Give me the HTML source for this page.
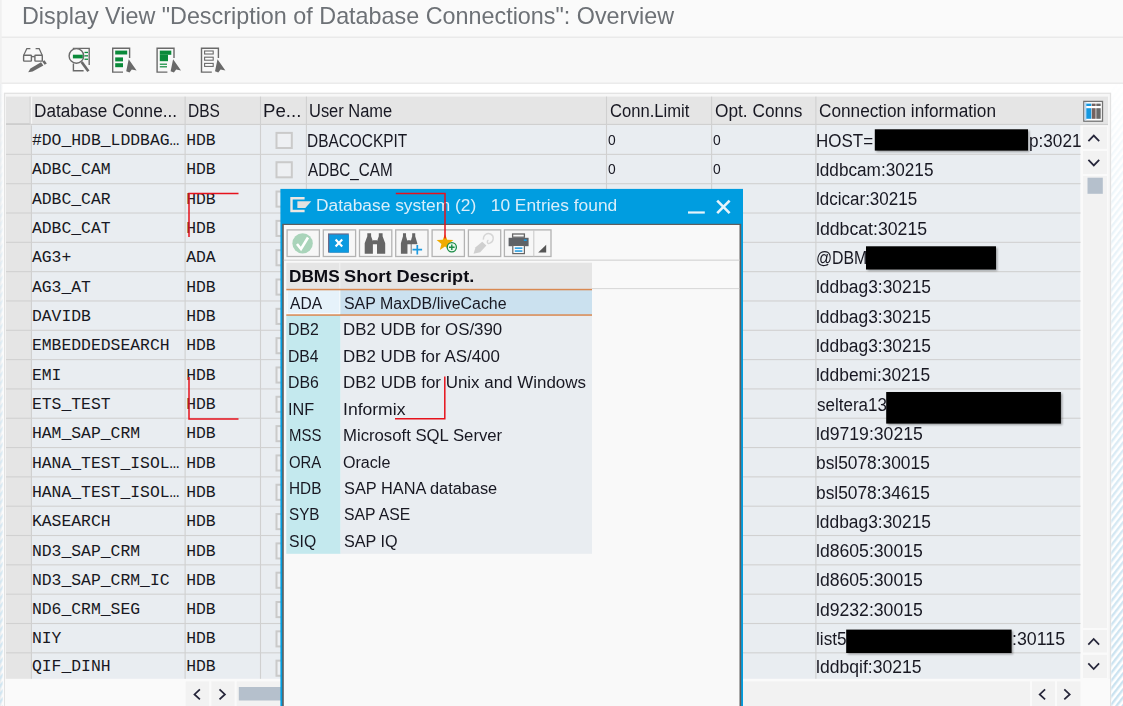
<!DOCTYPE html>
<html><head><meta charset="utf-8"><title>Display View</title><style>
html,body{margin:0;padding:0}
body{width:1123px;height:706px;overflow:hidden;position:relative;background:#fafafa}
svg{position:absolute;left:0;top:0}
span{position:absolute;white-space:pre;line-height:30px;height:30px;transform-origin:0 0}
.title{font-family:"Liberation Sans",sans-serif;font-size:23.6px;font-weight:400;color:#6d7176}
.hd{font-family:"Liberation Sans",sans-serif;font-size:18px;font-weight:400;color:#181822}
.sans{font-family:"Liberation Sans",sans-serif;font-size:18px;font-weight:400;color:#181822}
.mono{font-family:"Liberation Mono",monospace;font-size:16.4px;font-weight:400;color:#181822}
.psans{font-family:"Liberation Sans",sans-serif;font-size:17.3px;font-weight:400;color:#181822}
.pbold{font-family:"Liberation Sans",sans-serif;font-size:17.3px;font-weight:700;color:#0c0c14}
.ptitle{font-family:"Liberation Sans",sans-serif;font-size:17.3px;font-weight:400;color:#d9eefa}
.zero{font-family:"Liberation Sans",sans-serif;font-size:14.8px;font-weight:400;color:#181822}
</style></head><body>
<svg width="1123" height="706" viewBox="0 0 1123 706" style="z-index:1"><defs><pattern id="hatch" width="4.9" height="4.9" patternUnits="userSpaceOnUse" patternTransform="rotate(-52)"><rect width="4.9" height="2.4" fill="#c9e2f0"/></pattern><linearGradient id="hfade" x1="0" y1="0" x2="0" y2="1"><stop offset="0" stop-color="#fff" stop-opacity="1"/><stop offset="0.12" stop-color="#fff" stop-opacity="0.92"/><stop offset="0.55" stop-color="#fff" stop-opacity="0.55"/><stop offset="1" stop-color="#fff" stop-opacity="0.12"/></linearGradient><linearGradient id="ledge" x1="0" y1="0" x2="1" y2="0"><stop offset="0" stop-color="#e9ebed"/><stop offset="1" stop-color="#ffffff"/></linearGradient><linearGradient id="vmg" x1="0" y1="0" x2="0" y2="1"><stop offset="0" stop-color="#fff" stop-opacity="0.02"/><stop offset="0.1" stop-color="#fff" stop-opacity="0.2"/><stop offset="0.35" stop-color="#fff" stop-opacity="0.5"/><stop offset="1" stop-color="#fff" stop-opacity="1"/></linearGradient><mask id="vm" maskUnits="userSpaceOnUse" x="0" y="0" width="1123" height="706"><rect x="0" y="84" width="1123" height="622" fill="url(#vmg)"/></mask></defs>
<rect x="0.00" y="0.00" width="1123.00" height="706.00" fill="#fafafa" />
<rect x="0.00" y="36.70" width="1123.00" height="1.10" fill="#e2e2e2" />
<rect x="0.00" y="37.80" width="1123.00" height="45.20" fill="#f8f8f8" />
<rect x="0.00" y="82.70" width="1123.00" height="1.10" fill="#e2e2e2" />
<rect x="0.00" y="83.80" width="1123.00" height="622.20" fill="#ffffff" />
<rect x="0.00" y="0.00" width="1.70" height="84.00" fill="#f0f0f0" />
<rect x="0.00" y="84.00" width="3.00" height="622.00" fill="url(#ledge)" />
<rect x="0.00" y="84.00" width="2.70" height="622.00" fill="url(#hatch)" mask="url(#vm)" opacity="0.8"/>
<rect x="4.5" y="93.3" width="1106" height="640" fill="#f7f7f7" stroke="#e2e2e2" stroke-width="1.3"/>
<rect x="6.00" y="96.60" width="1102.00" height="27.40" fill="#e5e5e5" />
<rect x="6.00" y="123.20" width="24.80" height="2.20" fill="#cdcdcd" />
<rect x="30.80" y="123.90" width="1077.20" height="1.30" fill="#d0d0d0" />
<rect x="6.00" y="125.30" width="24.80" height="553.60" fill="#e5e5e5" />
<rect x="30.80" y="125.20" width="1049.70" height="553.70" fill="#e9edf1" />
<rect x="1080.50" y="125.30" width="27.50" height="553.60" fill="#fafafa" />
<rect x="1083.00" y="126.70" width="24.00" height="22.10" fill="#f2f2f2" />
<rect x="1083.00" y="151.00" width="24.00" height="23.00" fill="#f2f2f2" />
<rect x="1083.00" y="176.00" width="24.00" height="452.00" fill="#f2f2f2" />
<rect x="1083.00" y="630.00" width="24.00" height="22.50" fill="#f2f2f2" />
<rect x="1083.00" y="654.80" width="24.00" height="23.20" fill="#f2f2f2" />
<rect x="1087.50" y="177.70" width="15.30" height="16.10" fill="#b5c0cc" />
<rect x="6.00" y="153.82" width="1074.50" height="1.10" fill="#d1d1d1" />
<rect x="6.00" y="183.14" width="1074.50" height="1.10" fill="#d1d1d1" />
<rect x="6.00" y="212.46" width="1074.50" height="1.10" fill="#d1d1d1" />
<rect x="6.00" y="241.78" width="1074.50" height="1.10" fill="#d1d1d1" />
<rect x="6.00" y="271.10" width="1074.50" height="1.10" fill="#d1d1d1" />
<rect x="6.00" y="300.42" width="1074.50" height="1.10" fill="#d1d1d1" />
<rect x="6.00" y="329.74" width="1074.50" height="1.10" fill="#d1d1d1" />
<rect x="6.00" y="359.06" width="1074.50" height="1.10" fill="#d1d1d1" />
<rect x="6.00" y="388.38" width="1074.50" height="1.10" fill="#d1d1d1" />
<rect x="6.00" y="417.70" width="1074.50" height="1.10" fill="#d1d1d1" />
<rect x="6.00" y="447.02" width="1074.50" height="1.10" fill="#d1d1d1" />
<rect x="6.00" y="476.34" width="1074.50" height="1.10" fill="#d1d1d1" />
<rect x="6.00" y="505.66" width="1074.50" height="1.10" fill="#d1d1d1" />
<rect x="6.00" y="534.98" width="1074.50" height="1.10" fill="#d1d1d1" />
<rect x="6.00" y="564.30" width="1074.50" height="1.10" fill="#d1d1d1" />
<rect x="6.00" y="593.62" width="1074.50" height="1.10" fill="#d1d1d1" />
<rect x="6.00" y="622.94" width="1074.50" height="1.10" fill="#d1d1d1" />
<rect x="6.00" y="652.26" width="1074.50" height="1.10" fill="#d1d1d1" />
<rect x="184.55" y="96.60" width="1.10" height="582.30" fill="#d0d0d0" />
<rect x="259.95" y="96.60" width="1.10" height="582.30" fill="#d0d0d0" />
<rect x="305.85" y="96.60" width="1.10" height="582.30" fill="#d0d0d0" />
<rect x="605.95" y="96.60" width="1.10" height="582.30" fill="#d0d0d0" />
<rect x="711.05" y="96.60" width="1.10" height="582.30" fill="#d0d0d0" />
<rect x="815.35" y="96.60" width="1.10" height="582.30" fill="#d0d0d0" />
<rect x="30.70" y="125.30" width="1.30" height="553.60" fill="#d0d0d0" />
<rect x="29.40" y="96.60" width="1.40" height="26.80" fill="#d8d8d8" />
<rect x="30.80" y="96.60" width="1.40" height="27.00" fill="#f6f6f6" />
<rect x="276.5" y="132.90" width="15.3" height="15.1" fill="#eef0f3" stroke="#cacaca" stroke-width="2"/>
<rect x="276.5" y="162.22" width="15.3" height="15.1" fill="#eef0f3" stroke="#cacaca" stroke-width="2"/>
<rect x="276.5" y="191.54" width="15.3" height="15.1" fill="#eef0f3" stroke="#cacaca" stroke-width="2"/>
<rect x="276.5" y="220.86" width="15.3" height="15.1" fill="#eef0f3" stroke="#cacaca" stroke-width="2"/>
<rect x="276.5" y="250.18" width="15.3" height="15.1" fill="#eef0f3" stroke="#cacaca" stroke-width="2"/>
<rect x="276.5" y="279.50" width="15.3" height="15.1" fill="#eef0f3" stroke="#cacaca" stroke-width="2"/>
<rect x="276.5" y="308.82" width="15.3" height="15.1" fill="#eef0f3" stroke="#cacaca" stroke-width="2"/>
<rect x="276.5" y="338.14" width="15.3" height="15.1" fill="#eef0f3" stroke="#cacaca" stroke-width="2"/>
<rect x="276.5" y="367.46" width="15.3" height="15.1" fill="#eef0f3" stroke="#cacaca" stroke-width="2"/>
<rect x="276.5" y="396.78" width="15.3" height="15.1" fill="#eef0f3" stroke="#cacaca" stroke-width="2"/>
<rect x="276.5" y="426.10" width="15.3" height="15.1" fill="#eef0f3" stroke="#cacaca" stroke-width="2"/>
<rect x="276.5" y="455.42" width="15.3" height="15.1" fill="#eef0f3" stroke="#cacaca" stroke-width="2"/>
<rect x="276.5" y="484.74" width="15.3" height="15.1" fill="#eef0f3" stroke="#cacaca" stroke-width="2"/>
<rect x="276.5" y="514.06" width="15.3" height="15.1" fill="#eef0f3" stroke="#cacaca" stroke-width="2"/>
<rect x="276.5" y="543.38" width="15.3" height="15.1" fill="#eef0f3" stroke="#cacaca" stroke-width="2"/>
<rect x="276.5" y="572.70" width="15.3" height="15.1" fill="#eef0f3" stroke="#cacaca" stroke-width="2"/>
<rect x="276.5" y="602.02" width="15.3" height="15.1" fill="#eef0f3" stroke="#cacaca" stroke-width="2"/>
<rect x="276.5" y="631.34" width="15.3" height="15.1" fill="#eef0f3" stroke="#cacaca" stroke-width="2"/>
<rect x="276.5" y="660.66" width="15.3" height="15.1" fill="#eef0f3" stroke="#cacaca" stroke-width="2"/>
<rect x="5.00" y="678.90" width="1105.00" height="27.10" fill="#fafafa" />
<rect x="185.70" y="681.30" width="23.50" height="24.70" fill="#f2f2f2" />
<rect x="211.30" y="681.30" width="23.30" height="24.70" fill="#f2f2f2" />
<rect x="236.70" y="681.30" width="793.30" height="24.70" fill="#f2f2f2" />
<rect x="238.80" y="687.00" width="461.20" height="13.50" fill="#b5c0cc" />
<rect x="1032.00" y="681.30" width="23.00" height="24.70" fill="#f2f2f2" />
<rect x="1057.00" y="681.30" width="23.50" height="24.70" fill="#f2f2f2" />
<polyline points="1088.40,141.20 1093.80,135.60 1099.20,141.20" fill="none" stroke="#26263a" stroke-width="1.75"/>
<polyline points="1088.40,159.80 1093.80,165.40 1099.20,159.80" fill="none" stroke="#26263a" stroke-width="1.75"/>
<polyline points="1088.30,644.60 1093.70,639.00 1099.10,644.60" fill="none" stroke="#26263a" stroke-width="1.75"/>
<polyline points="1088.30,663.40 1093.70,669.00 1099.10,663.40" fill="none" stroke="#26263a" stroke-width="1.75"/>
<polyline points="199.90,689.40 194.50,694.40 199.90,699.40" fill="none" stroke="#26263a" stroke-width="1.75"/>
<polyline points="219.50,689.40 224.90,694.40 219.50,699.40" fill="none" stroke="#26263a" stroke-width="1.75"/>
<polyline points="1045.10,689.40 1039.70,694.40 1045.10,699.40" fill="none" stroke="#26263a" stroke-width="1.75"/>
<polyline points="1064.30,689.40 1069.70,694.40 1064.30,699.40" fill="none" stroke="#26263a" stroke-width="1.75"/>
<rect x="1083.8" y="101.4" width="18.7" height="19.8" fill="#ffffff" stroke="#737373" stroke-width="1.3"/>
<rect x="1084.60" y="102.20" width="1.80" height="18.20" fill="#b9d8f3" />
<rect x="1086.30" y="103.60" width="5.00" height="2.40" fill="#1498e0" />
<rect x="1086.30" y="108.20" width="5.00" height="10.60" fill="#1498e0" />
<rect x="1091.80" y="103.60" width="3.80" height="2.40" fill="#74625f" />
<rect x="1091.80" y="108.20" width="3.80" height="10.60" fill="#74625f" />
<rect x="1096.30" y="103.60" width="4.40" height="2.40" fill="#696969" />
<rect x="1096.30" y="108.20" width="4.40" height="10.60" fill="#696969" />
<rect x="1111.30" y="84.00" width="11.70" height="622.00" fill="url(#hatch)" mask="url(#vm)"/>
<defs><filter id="bl" x="-5%" y="-20%" width="110%" height="140%"><feGaussianBlur stdDeviation="1"/></filter></defs>
<rect x="876.30" y="130.80" width="153.00" height="21.10" fill="#000" opacity="0.35" filter="url(#bl)"/>
<rect x="874.80" y="129.30" width="153.20" height="21.30" fill="#000" />
<rect x="867.50" y="247.80" width="129.80" height="23.00" fill="#000" opacity="0.35" filter="url(#bl)"/>
<rect x="866.00" y="246.30" width="130.00" height="23.20" fill="#000" />
<rect x="887.70" y="393.50" width="174.50" height="31.40" fill="#000" opacity="0.35" filter="url(#bl)"/>
<rect x="886.20" y="392.00" width="174.70" height="31.60" fill="#000" />
<rect x="847.70" y="631.10" width="165.20" height="23.20" fill="#000" opacity="0.35" filter="url(#bl)"/>
<rect x="846.20" y="629.60" width="165.40" height="23.40" fill="#000" />
<g fill="none" stroke="#6a6a6a" stroke-width="1.4"><rect x="23.6" y="55.3" width="7.8" height="5.8" rx="0.6"/><rect x="34.9" y="55.3" width="7.4" height="5.8" rx="0.6"/><path d="M31.4 56.6 L34.9 56.6"/><path d="M23.7 55.2 L26.8 48.7 L30.4 48.7" stroke-width="1.2"/><path d="M42.2 55.2 L39.2 48.7 L35.6 48.7" stroke-width="1.2"/></g>
<path d="M28.2 72.3 L30.4 68.4 L41.0 62.2 L43.4 65.4 L32.6 71.6 Z" fill="#6a6a6a"/><path d="M42.2 61.5 L44.5 60.2 L46.8 63.4 L44.6 64.8 Z" fill="#6a6a6a"/>
<g fill="none" stroke="#6a6a6a" stroke-width="1.4"><path d="M72.8 48.4 L89.2 48.4 L89.2 65"/><path d="M73.4 63.4 L73.4 70.8 L83.6 70.8"/><circle cx="76.4" cy="55.9" r="7.3" fill="#f8f8f8"/></g><path d="M81.6 62 L88.4 71.2" stroke="#6a6a6a" stroke-width="2.7"/>
<rect x="72.90" y="54.70" width="9.90" height="3.70" fill="#0a8a3a" />
<rect x="84.50" y="51.80" width="3.50" height="1.30" fill="#0a8a3a" />
<rect x="84.50" y="55.20" width="3.50" height="1.30" fill="#0a8a3a" />
<rect x="84.50" y="58.60" width="3.50" height="1.30" fill="#0a8a3a" />
<path d="M129.6 58 L129.6 48.3 L112.7 48.3 L112.7 72.1 L123.0 72.1" fill="none" stroke="#6a6a6a" stroke-width="1.4"/><path d="M128.7 59.2 L136.6 70.5 L131.8 69.6 L129.5 72.6 L126.2 71.2 Z" fill="#6a6a6a"/>
<rect x="115.20" y="50.60" width="12.00" height="3.90" fill="#0a8a3a" />
<rect x="115.20" y="57.40" width="7.80" height="4.00" fill="#0a8a3a" />
<rect x="115.20" y="63.20" width="7.80" height="4.00" fill="#0a8a3a" />
<path d="M174.0 58 L174.0 48.3 L157.1 48.3 L157.1 72.1 L167.4 72.1" fill="none" stroke="#6a6a6a" stroke-width="1.4"/><path d="M173.1 59.2 L181.0 70.5 L176.2 69.6 L173.9 72.6 L170.6 71.2 Z" fill="#6a6a6a"/>
<rect x="159.80" y="50.60" width="11.50" height="4.20" fill="#0a8a3a" />
<rect x="159.80" y="54.80" width="8.20" height="6.40" fill="#0a8a3a" />
<rect x="159.80" y="63.60" width="7.20" height="1.20" fill="#0a8a3a" />
<rect x="159.80" y="66.20" width="7.20" height="1.20" fill="#0a8a3a" />
<path d="M218.4 58 L218.4 48.3 L201.5 48.3 L201.5 72.1 L211.8 72.1" fill="none" stroke="#6a6a6a" stroke-width="1.4"/><path d="M217.5 59.2 L225.4 70.5 L220.6 69.6 L218.3 72.6 L215.0 71.2 Z" fill="#6a6a6a"/>
<rect x="204.6" y="51" width="8.6" height="3" fill="#fff" stroke="#6a6a6a" stroke-width="1.1"/>
<rect x="204.6" y="57.2" width="8.6" height="3" fill="#fff" stroke="#6a6a6a" stroke-width="1.1"/>
<rect x="204.6" y="63.4" width="8.6" height="3" fill="#fff" stroke="#6a6a6a" stroke-width="1.1"/></svg>
<span class="title" style="left:21.98px;top:0.82px;z-index:2;transform:scaleX(0.9897)">Display View "Description of Database Connections": Overview</span>
<span class="hd" style="left:33.96px;top:96.36px;z-index:2;transform:scaleX(0.9526)">Database Conne...</span>
<span class="hd" style="left:187.59px;top:96.36px;z-index:2;transform:scaleX(0.8609)">DBS</span>
<span class="hd" style="left:262.84px;top:96.36px;z-index:2;transform:scaleX(1.0357)">Pe...</span>
<span class="hd" style="left:308.97px;top:96.36px;z-index:2;transform:scaleX(0.9140)">User Name</span>
<span class="hd" style="left:610.02px;top:96.36px;z-index:2;transform:scaleX(0.9220)">Conn.Limit</span>
<span class="hd" style="left:714.79px;top:96.36px;z-index:2;transform:scaleX(0.9594)">Opt. Conns</span>
<span class="hd" style="left:819.39px;top:96.36px;z-index:2;transform:scaleX(0.9561)">Connection information</span>
<span class="mono" style="left:31.90px;top:126.33px;z-index:2">#DO_HDB_LDDBAG…</span>
<span class="mono" style="left:186.20px;top:126.33px;z-index:2">HDB</span>
<span class="sans" style="left:307.40px;top:125.96px;z-index:2;transform:scaleX(0.8569)">DBACOCKPIT</span>
<span class="zero" style="left:608.07px;top:125.27px;z-index:2;transform:scaleX(0.9324)">0</span>
<span class="zero" style="left:713.17px;top:125.27px;z-index:2;transform:scaleX(0.9324)">0</span>
<span class="sans" style="left:816.47px;top:125.96px;z-index:2;transform:scaleX(0.9429)">HOST=</span>
<span class="sans" style="left:1028.63px;top:125.96px;z-index:2;transform:scaleX(0.9530)">p:3021</span>
<span class="mono" style="left:31.90px;top:155.35px;z-index:2">ADBC_CAM</span>
<span class="mono" style="left:186.20px;top:155.35px;z-index:2">HDB</span>
<span class="sans" style="left:307.90px;top:154.98px;z-index:2;transform:scaleX(0.8461)">ADBC_CAM</span>
<span class="zero" style="left:608.07px;top:154.29px;z-index:2;transform:scaleX(0.9324)">0</span>
<span class="zero" style="left:713.17px;top:154.29px;z-index:2;transform:scaleX(0.9324)">0</span>
<span class="sans" style="left:816.33px;top:154.98px;z-index:2;transform:scaleX(0.9543)">lddbcam:30215</span>
<span class="mono" style="left:31.90px;top:184.67px;z-index:2">ADBC_CAR</span>
<span class="mono" style="left:186.20px;top:184.67px;z-index:2">HDB</span>
<span class="sans" style="left:816.34px;top:184.30px;z-index:2;transform:scaleX(0.9447)">ldcicar:30215</span>
<span class="mono" style="left:31.90px;top:213.99px;z-index:2">ADBC_CAT</span>
<span class="mono" style="left:186.20px;top:213.99px;z-index:2">HDB</span>
<span class="sans" style="left:816.29px;top:213.62px;z-index:2;transform:scaleX(0.9825)">lddbcat:30215</span>
<span class="mono" style="left:31.90px;top:243.31px;z-index:2">AG3+</span>
<span class="mono" style="left:186.20px;top:243.31px;z-index:2">ADA</span>
<span class="sans" style="left:815.76px;top:242.94px;z-index:2;transform:scaleX(0.8805)">@DBM</span>
<span class="mono" style="left:31.90px;top:272.63px;z-index:2">AG3_AT</span>
<span class="mono" style="left:186.20px;top:272.63px;z-index:2">HDB</span>
<span class="sans" style="left:816.31px;top:272.26px;z-index:2;transform:scaleX(0.9653)">lddbag3:30215</span>
<span class="mono" style="left:31.90px;top:301.95px;z-index:2">DAVIDB</span>
<span class="mono" style="left:186.20px;top:301.95px;z-index:2">HDB</span>
<span class="sans" style="left:816.31px;top:301.58px;z-index:2;transform:scaleX(0.9653)">lddbag3:30215</span>
<span class="mono" style="left:31.90px;top:331.27px;z-index:2">EMBEDDEDSEARCH</span>
<span class="mono" style="left:186.20px;top:331.27px;z-index:2">HDB</span>
<span class="sans" style="left:816.31px;top:330.90px;z-index:2;transform:scaleX(0.9653)">lddbag3:30215</span>
<span class="mono" style="left:31.90px;top:360.59px;z-index:2">EMI</span>
<span class="mono" style="left:186.20px;top:360.59px;z-index:2">HDB</span>
<span class="sans" style="left:816.31px;top:360.22px;z-index:2;transform:scaleX(0.9661)">lddbemi:30215</span>
<span class="mono" style="left:31.90px;top:389.91px;z-index:2">ETS_TEST</span>
<span class="mono" style="left:186.20px;top:389.91px;z-index:2">HDB</span>
<span class="sans" style="left:816.93px;top:389.54px;z-index:2;transform:scaleX(0.9447)">seltera13</span>
<span class="mono" style="left:31.90px;top:419.23px;z-index:2">HAM_SAP_CRM</span>
<span class="mono" style="left:186.20px;top:419.23px;z-index:2">HDB</span>
<span class="sans" style="left:816.30px;top:418.86px;z-index:2;transform:scaleX(0.9790)">ld9719:30215</span>
<span class="mono" style="left:31.90px;top:448.55px;z-index:2">HANA_TEST_ISOL…</span>
<span class="mono" style="left:186.20px;top:448.55px;z-index:2">HDB</span>
<span class="sans" style="left:816.22px;top:448.18px;z-index:2;transform:scaleX(0.9634)">bsl5078:30015</span>
<span class="mono" style="left:31.90px;top:477.87px;z-index:2">HANA_TEST_ISOL…</span>
<span class="mono" style="left:186.20px;top:477.87px;z-index:2">HDB</span>
<span class="sans" style="left:816.22px;top:477.50px;z-index:2;transform:scaleX(0.9634)">bsl5078:34615</span>
<span class="mono" style="left:31.90px;top:507.19px;z-index:2">KASEARCH</span>
<span class="mono" style="left:186.20px;top:507.19px;z-index:2">HDB</span>
<span class="sans" style="left:816.31px;top:506.82px;z-index:2;transform:scaleX(0.9653)">lddbag3:30215</span>
<span class="mono" style="left:31.90px;top:536.51px;z-index:2">ND3_SAP_CRM</span>
<span class="mono" style="left:186.20px;top:536.51px;z-index:2">HDB</span>
<span class="sans" style="left:816.30px;top:536.14px;z-index:2;transform:scaleX(0.9790)">ld8605:30015</span>
<span class="mono" style="left:31.90px;top:565.83px;z-index:2">ND3_SAP_CRM_IC</span>
<span class="mono" style="left:186.20px;top:565.83px;z-index:2">HDB</span>
<span class="sans" style="left:816.30px;top:565.46px;z-index:2;transform:scaleX(0.9790)">ld8605:30015</span>
<span class="mono" style="left:31.90px;top:595.15px;z-index:2">ND6_CRM_SEG</span>
<span class="mono" style="left:186.20px;top:595.15px;z-index:2">HDB</span>
<span class="sans" style="left:816.30px;top:594.78px;z-index:2;transform:scaleX(0.9790)">ld9232:30015</span>
<span class="mono" style="left:31.90px;top:624.47px;z-index:2">NIY</span>
<span class="mono" style="left:186.20px;top:624.47px;z-index:2">HDB</span>
<span class="sans" style="left:816.33px;top:624.10px;z-index:2;transform:scaleX(0.9551)">list5</span>
<span class="sans" style="left:1012.01px;top:624.10px;z-index:2;transform:scaleX(0.9887)">:30115</span>
<span class="mono" style="left:31.90px;top:651.99px;z-index:2">QIF_DINH</span>
<span class="mono" style="left:186.20px;top:651.99px;z-index:2">HDB</span>
<span class="sans" style="left:816.30px;top:651.62px;z-index:2;transform:scaleX(0.9770)">lddbqif:30215</span>
<svg width="1123" height="706" viewBox="0 0 1123 706" style="z-index:3"><rect x="280.40" y="188.90" width="462.60" height="522.10" fill="#009de0" />
<rect x="282.20" y="223.80" width="459.00" height="487.20" fill="#5e5e5e" />
<rect x="283.80" y="225.00" width="455.70" height="486.00" fill="#f9f9f9" />
<path d="M304.6 198.3 L291.5 198.3 L291.5 211 L304.6 211" fill="none" stroke="#ece7e3" stroke-width="2.4"/><path d="M297.4 201.2 L311.3 201.2 L305.3 207.9 L297.4 207.9 Z" fill="#e4e2e0"/>
<rect x="688.00" y="211.40" width="16.80" height="2.20" fill="#e6f4fb" />
<path d="M717.2 200.6 L729.6 213.2 M729.6 200.6 L717.2 213.2" stroke="#e6f4fb" stroke-width="2.6" fill="none"/>
<rect x="287.1" y="229.9" width="32.3" height="26.6" fill="#f7f7f7" stroke="#b3b3b3" stroke-width="1.3"/>
<rect x="323.3" y="229.9" width="32.3" height="26.6" fill="#f7f7f7" stroke="#b3b3b3" stroke-width="1.3"/>
<rect x="359.5" y="229.9" width="32.3" height="26.6" fill="#f7f7f7" stroke="#b3b3b3" stroke-width="1.3"/>
<rect x="395.7" y="229.9" width="32.3" height="26.6" fill="#f7f7f7" stroke="#b3b3b3" stroke-width="1.3"/>
<rect x="432.1" y="229.9" width="32.3" height="26.6" fill="#f7f7f7" stroke="#b3b3b3" stroke-width="1.3"/>
<rect x="468.4" y="229.9" width="32.3" height="26.6" fill="#f7f7f7" stroke="#b3b3b3" stroke-width="1.3"/>
<rect x="504.4" y="229.9" width="46.6" height="26.6" fill="#f7f7f7" stroke="#b3b3b3" stroke-width="1.3"/>
<rect x="533.30" y="229.90" width="1.00" height="26.60" fill="#c8c8c8" />
<path d="M546.2 244.8 L546.2 252.5 L538.2 252.5 Z" fill="#555"/>
<circle cx="302.6" cy="243.4" r="10.2" fill="#a9d4ba"/><path d="M297 244 L301 249 L308 237.5" fill="none" stroke="#fff" stroke-width="2.6"/>
<rect x="328.00" y="233.40" width="20.80" height="19.20" fill="#6a6a8a" />
<rect x="329.30" y="234.60" width="19.50" height="18.00" fill="#0b9ae0" />
<path d="M335.6 239.6 L342.2 246.4 M342.2 239.6 L335.6 246.4" stroke="#fff" stroke-width="2.2"/>
<path d="M367.30 233.30 L371.10 233.30 L371.10 236.30 L372.90 241.30 L372.90 253.70 L364.70 253.70 L364.70 243.30 L367.30 236.30 Z M378.80 233.30 L382.60 233.30 L382.60 236.30 L385.20 243.30 L385.20 253.70 L377.00 253.70 L377.00 241.30 L378.80 236.30 Z M372.90 240.30 L377.00 240.30 L377.00 244.30 L372.90 244.30 Z" fill="#666"/>
<path d="M402.98 233.30 L406.02 233.30 L406.02 236.30 L407.46 241.30 L407.46 253.70 L400.90 253.70 L400.90 243.30 L402.98 236.30 Z M412.18 233.30 L415.22 233.30 L415.22 236.30 L417.30 243.30 L417.30 253.70 L410.74 253.70 L410.74 241.30 L412.18 236.30 Z M407.46 240.30 L410.74 240.30 L410.74 244.30 L407.46 244.30 Z" fill="#666"/>
<rect x="411.60" y="244.20" width="11.80" height="11.20" fill="#f7f7f7" />
<path d="M417.3 244.9 L417.3 254.5 M412.5 249.7 L422.1 249.7" stroke="#1e9be0" stroke-width="1.7"/>
<polygon points="445.00,234.00 447.23,239.73 453.37,240.08 448.61,243.97 450.17,249.92 445.00,246.60 439.83,249.92 441.39,243.97 436.63,240.08 442.77,239.73" fill="#f0ab00"/>
<circle cx="451.8" cy="247.2" r="4.6" fill="#eaf7ee" stroke="#1a8c46" stroke-width="1.3"/><path d="M451.8 244.4 L451.8 250 M449 247.2 L454.6 247.2" stroke="#1a8c46" stroke-width="1.4"/>
<path d="M473.5 253.8 L475.6 247.2 L482.2 241.8 L486.4 245.6 L480.2 252.2 Z" fill="#cfcfcf"/><path d="M483.4 239.6 C483 235 487 232.4 490.6 234 C494.6 236 494 242 489.4 243.4 C487 244 486.6 241.2 488.4 240.2" fill="none" stroke="#d6d6d6" stroke-width="1.4"/>
<rect x="512.60" y="234.00" width="11.80" height="3.20" fill="#f7f7f7" stroke="#666" stroke-width="1.3"/>
<rect x="508.60" y="237.80" width="20.00" height="8.40" fill="#5f6266" />
<rect x="523.80" y="239.40" width="3.00" height="1.60" fill="#1e9be0" />
<rect x="512.80" y="245.40" width="11.60" height="8.20" fill="#fafafa" stroke="#666" stroke-width="1.2"/>
<rect x="514.80" y="247.40" width="7.60" height="1.50" fill="#1e9be0" />
<rect x="514.80" y="250.30" width="7.60" height="1.50" fill="#1e9be0" />
<rect x="283.80" y="259.60" width="455.70" height="1.10" fill="#d2d2d2" />
<rect x="286.30" y="262.70" width="305.70" height="26.30" fill="#e5e5e5" />
<rect x="339.20" y="262.70" width="1.10" height="25.90" fill="#f1f1f1" />
<rect x="592.00" y="288.10" width="147.30" height="1.00" fill="#d6d6d6" />
<rect x="286.30" y="290.00" width="54.30" height="263.80" fill="#c4e9ee" />
<rect x="340.60" y="290.00" width="251.40" height="263.80" fill="#e9edf1" />
<rect x="286.30" y="290.00" width="53.90" height="25.00" fill="#fafcfe" />
<rect x="287.70" y="290.00" width="51.70" height="23.20" fill="#e6f2fa" />
<rect x="340.60" y="290.00" width="251.40" height="25.00" fill="#cbe1ef" />
<rect x="286.30" y="288.80" width="305.70" height="1.50" fill="#d98850" />
<rect x="286.30" y="314.30" width="305.70" height="1.50" fill="#d98850" /></svg>
<span class="ptitle" style="left:315.64px;top:189.91px;z-index:4;transform:scaleX(1.0051)">Database system (2)   10 Entries found</span>
<span class="pbold" style="left:288.92px;top:260.91px;z-index:4;transform:scaleX(0.9960)">DBMS</span>
<span class="pbold" style="left:343.82px;top:260.91px;z-index:4;transform:scaleX(1.0520)">Short Descript.</span>
<span class="psans" style="left:289.70px;top:288.01px;z-index:4;transform:scaleX(0.9031)">ADA</span>
<span class="psans" style="left:343.60px;top:288.01px;z-index:4;transform:scaleX(0.9216)">SAP MaxDB/liveCache</span>
<span class="psans" style="left:288.46px;top:314.43px;z-index:4;transform:scaleX(0.9177)">DB2</span>
<span class="psans" style="left:342.78px;top:314.43px;z-index:4;transform:scaleX(0.9748)">DB2 UDB for OS/390</span>
<span class="psans" style="left:288.47px;top:340.85px;z-index:4;transform:scaleX(0.9099)">DB4</span>
<span class="psans" style="left:342.78px;top:340.85px;z-index:4;transform:scaleX(0.9777)">DB2 UDB for AS/400</span>
<span class="psans" style="left:288.46px;top:367.27px;z-index:4;transform:scaleX(0.9177)">DB6</span>
<span class="psans" style="left:342.77px;top:367.27px;z-index:4;transform:scaleX(0.9807)">DB2 UDB for Unix and Windows</span>
<span class="psans" style="left:288.43px;top:393.69px;z-index:4;transform:scaleX(0.9403)">INF</span>
<span class="psans" style="left:342.73px;top:393.69px;z-index:4;transform:scaleX(1.0155)">Informix</span>
<span class="psans" style="left:288.53px;top:420.11px;z-index:4;transform:scaleX(0.8641)">MSS</span>
<span class="psans" style="left:342.79px;top:420.11px;z-index:4;transform:scaleX(0.9675)">Microsoft SQL Server</span>
<span class="psans" style="left:289.00px;top:446.53px;z-index:4;transform:scaleX(0.8623)">ORA</span>
<span class="psans" style="left:343.35px;top:446.53px;z-index:4;transform:scaleX(0.9304)">Oracle</span>
<span class="psans" style="left:288.50px;top:472.95px;z-index:4;transform:scaleX(0.8883)">HDB</span>
<span class="psans" style="left:343.59px;top:472.95px;z-index:4;transform:scaleX(0.9455)">SAP HANA database</span>
<span class="psans" style="left:289.22px;top:499.37px;z-index:4;transform:scaleX(0.8816)">SYB</span>
<span class="psans" style="left:343.61px;top:499.37px;z-index:4;transform:scaleX(0.9124)">SAP ASE</span>
<span class="psans" style="left:289.21px;top:525.79px;z-index:4;transform:scaleX(0.9120)">SIQ</span>
<span class="psans" style="left:343.59px;top:525.79px;z-index:4;transform:scaleX(0.9363)">SAP IQ</span>
<svg width="1123" height="706" viewBox="0 0 1123 706" style="z-index:5"><path d="M238.5 193.6 L189 193.6 L189 237" fill="none" stroke="#e6121c" stroke-width="1.5"/>
<path d="M395.8 193.6 L445 193.6 L445 238.4" fill="none" stroke="#e6121c" stroke-width="1.5"/>
<path d="M189 377 L189 419 L238.5 419" fill="none" stroke="#e6121c" stroke-width="1.5"/>
<path d="M444.8 376.6 L444.8 418.8 L395 418.8" fill="none" stroke="#e6121c" stroke-width="1.5"/></svg>
</body></html>
